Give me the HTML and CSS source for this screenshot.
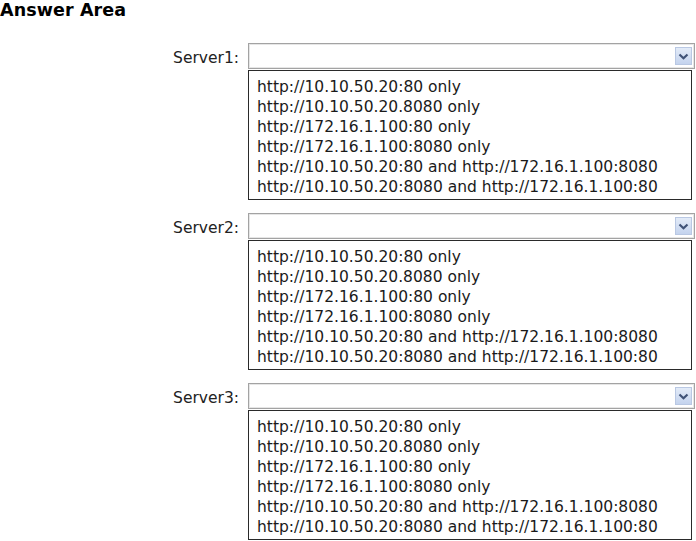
FILE: index.html
```html
<!DOCTYPE html>
<html>
<head>
<meta charset="utf-8">
<link rel="stylesheet" href="styles.css">
</head>
<body>
<h1 class="title">Answer Area</h1>
<div class="groups">
  <div class="group">
    <div class="label">Server1:</div>
    <div class="select"><span class="btn"><svg width="11" height="7" viewBox="0 0 11 7"><path d="M1.5 1.5 L5.5 5.2 L9.5 1.5" fill="none" stroke="#3f5277" stroke-width="2.2"/></svg></span></div>
    <div class="spacer"></div>
    <ul class="list">
      <li>http://10.10.50.20:80 only</li>
      <li>http://10.10.50.20.8080 only</li>
      <li>http://172.16.1.100:80 only</li>
      <li>http://172.16.1.100:8080 only</li>
      <li>http://10.10.50.20:80 and http://172.16.1.100:8080</li>
      <li>http://10.10.50.20:8080 and http://172.16.1.100:80</li>
    </ul>
  </div>
  <div class="group">
    <div class="label">Server2:</div>
    <div class="select"><span class="btn"><svg width="11" height="7" viewBox="0 0 11 7"><path d="M1.5 1.5 L5.5 5.2 L9.5 1.5" fill="none" stroke="#3f5277" stroke-width="2.2"/></svg></span></div>
    <div class="spacer"></div>
    <ul class="list">
      <li>http://10.10.50.20:80 only</li>
      <li>http://10.10.50.20.8080 only</li>
      <li>http://172.16.1.100:80 only</li>
      <li>http://172.16.1.100:8080 only</li>
      <li>http://10.10.50.20:80 and http://172.16.1.100:8080</li>
      <li>http://10.10.50.20:8080 and http://172.16.1.100:80</li>
    </ul>
  </div>
  <div class="group">
    <div class="label">Server3:</div>
    <div class="select"><span class="btn"><svg width="11" height="7" viewBox="0 0 11 7"><path d="M1.5 1.5 L5.5 5.2 L9.5 1.5" fill="none" stroke="#3f5277" stroke-width="2.2"/></svg></span></div>
    <div class="spacer"></div>
    <ul class="list">
      <li>http://10.10.50.20:80 only</li>
      <li>http://10.10.50.20.8080 only</li>
      <li>http://172.16.1.100:80 only</li>
      <li>http://172.16.1.100:8080 only</li>
      <li>http://10.10.50.20:80 and http://172.16.1.100:8080</li>
      <li>http://10.10.50.20:8080 and http://172.16.1.100:80</li>
    </ul>
  </div>
</div>
</body>
</html>
```
FILE: styles.css
```css
html, body {
  margin: 0;
  padding: 0;
  background: #ffffff;
}
body {
  font-family: "DejaVu Sans", Verdana, sans-serif;
  color: #111111;
  width: 696px;
  height: 541px;
  overflow: hidden;
}
.title {
  margin: 0;
  font-size: 17.5px;
  line-height: 20px;
  font-weight: bold;
  color: #000000;
  letter-spacing: 0.1px;
}
.groups {
  display: flex;
  flex-direction: column;
  gap: 13px;
  padding-top: 23px;
}
.group {
  display: grid;
  grid-template-columns: 248px 447px;
}
.label {
  font-size: 15.5px;
  text-align: right;
  padding: 3px 9px 0 0;
  display: flex;
  align-items: center;
  justify-content: flex-end;
  color: #222222;
}
.select {
  height: 26px;
  box-sizing: border-box;
  border: 1px solid #a3a3a3;
  box-shadow: inset 0 0 0 1px #e6e6e6;
  background: #ffffff;
  display: flex;
  justify-content: flex-end;
  align-items: center;
  padding-right: 2px;
}
.btn {
  width: 17px;
  height: 18px;
  box-sizing: border-box;
  border: 1px solid #b9c8e3;
  background: linear-gradient(#e3ebf8, #c4d3ee);
  display: flex;
  align-items: center;
  justify-content: center;
}
.list {
  list-style: none;
  margin: 1px 0 0 0;
  width: 444px;
  box-sizing: border-box;
  border: 1px solid #2a2a2a;
  padding: 6px 0 2px 8px;
  font-size: 15.5px;
  line-height: 20px;
  color: #1a1a1a;
  white-space: nowrap;
}
```
